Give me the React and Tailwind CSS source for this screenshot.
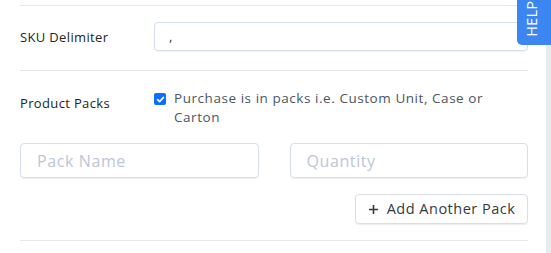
import React from 'react';

export default function App() {
  return (
    <div className="relative w-[551px] h-[253px] overflow-hidden bg-white font-['Open_Sans',sans-serif]">
      {/* scroll strip */}
      <div className="absolute right-0 top-0 bottom-0 w-[5px] bg-[#e9ecef]" />

      {/* Help tab */}
      <div className="absolute right-0 top-0 w-[34px] h-[45px] bg-[#3b86f0] rounded-bl-[5px] flex items-center justify-center">
        <span className="-rotate-90 text-white text-[14px] tracking-[0.6px] translate-x-[-3px] translate-y-[-4px]">HELP</span>
      </div>

      <div className="w-[508px] ml-[20px] pt-[5px]">
        <div className="border-t border-[#e3e6ea]" />

        {/* SKU Delimiter */}
        <div className="flex items-center pt-[16px] pb-[19px]">
          <label className="w-[134px] text-[13px] text-[#212529] tracking-[0.35px] translate-y-[1px]">SKU Delimiter</label>
          <div className="flex-1 h-[29px] border border-[#d5deeb] rounded-[4px] shadow-[0_1px_1px_rgba(0,0,0,0.06)] flex items-center pl-[14px] text-[13px] text-[#343a40]">
            ,
          </div>
        </div>

        <div className="border-t border-[#e3e6ea]" />

        {/* Product Packs */}
        <div className="flex pt-[18px]">
          <label className="w-[134px] pt-[5px] text-[13px] text-[#212529] tracking-[0.35px]">Product Packs</label>
          <div className="flex flex-1 gap-[8px]">
            <span className="mt-[4px] w-[12px] h-[12px] rounded-[2px] bg-[#0d6efd] flex items-center justify-center shrink-0">
              <svg width="9" height="9" viewBox="0 0 10 10">
                <path d="M1.8 5.2 L4 7.4 L8.3 2.6" fill="none" stroke="white" strokeWidth="1.8" strokeLinecap="round" strokeLinejoin="round" />
              </svg>
            </span>
            <p className="text-[13.5px] leading-[19px] text-[#4b5563] tracking-[0.55px]">
              Purchase is in packs i.e. Custom Unit, Case or
              <br />
              Carton
            </p>
          </div>
        </div>

        {/* Pack inputs */}
        <div className="flex gap-[31px] mt-[16px]">
          <div className="flex-1 h-[35px] border border-[#d5deeb] rounded-[4px] shadow-[0_1px_1px_rgba(0,0,0,0.06)] flex items-center pl-[16px] text-[16px] text-[#bcc6d8] tracking-[0.6px]">
            Pack Name
          </div>
          <div className="flex-1 h-[35px] border border-[#d5deeb] rounded-[4px] shadow-[0_1px_1px_rgba(0,0,0,0.06)] flex items-center pl-[16px] text-[16px] text-[#bcc6d8] tracking-[0.6px]">
            Quantity
          </div>
        </div>

        <div className="flex justify-end mt-[16px]">
          <button className="h-[30px] w-[173px] border border-[#d9dee5] rounded-[4px] shadow-[0_1px_1px_rgba(0,0,0,0.08)] flex items-center justify-center gap-[8px] text-[14.5px] text-[#343a40] tracking-[0.5px]">
            <svg width="11" height="11" viewBox="0 0 11 11">
              <path d="M5.5 1 V10 M1 5.5 H10" stroke="#343a40" strokeWidth="1.6" />
            </svg>
            Add Another Pack
          </button>
        </div>

        <div className="border-t border-[#e3e6ea] mt-[16px]" />
      </div>
    </div>
  );
}
